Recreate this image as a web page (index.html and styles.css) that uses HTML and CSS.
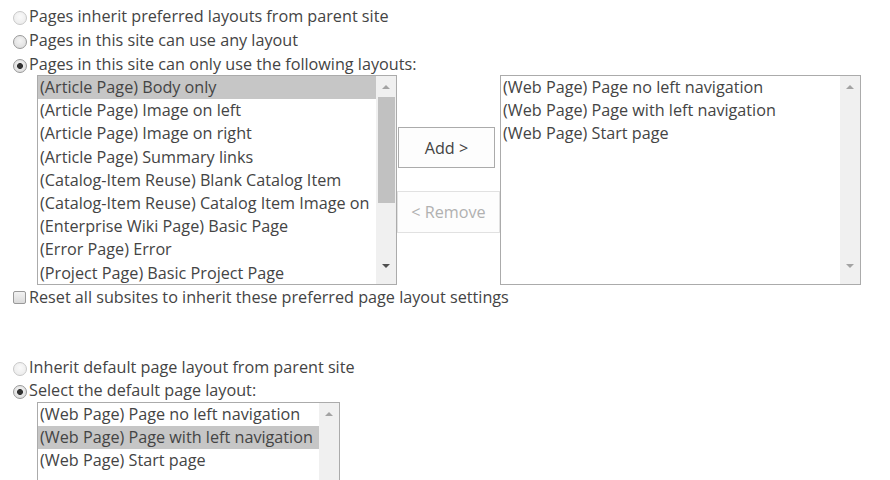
FILE: index.html
```html
<!DOCTYPE html>
<html lang="en">
<head>
<meta charset="utf-8">
<title>Page layouts and site templates</title>
<link rel="stylesheet" href="styles.css">
</head>
<body>
<div class="page">
  <section class="layouts">
    <div class="opt opt-top"><span class="radio is-disabled"></span><span class="lbl">Pages inherit preferred layouts from parent site</span></div>
    <div class="opt opt-top"><span class="radio"></span><span class="lbl">Pages in this site can use any layout</span></div>
    <div class="opt opt-top"><span class="radio is-checked"></span><span class="lbl">Pages in this site can only use the following layouts:</span></div>
    <div class="picker">
      <div class="listbox lb-source">
        <ul class="items">
          <li class="sel">(Article Page) Body only</li>
          <li>(Article Page) Image on left</li>
          <li>(Article Page) Image on right</li>
          <li>(Article Page) Summary links</li>
          <li>(Catalog-Item Reuse) Blank Catalog Item</li>
          <li>(Catalog-Item Reuse) Catalog Item Image on</li>
          <li>(Enterprise Wiki Page) Basic Page</li>
          <li>(Error Page) Error</li>
          <li>(Project Page) Basic Project Page</li>
        </ul>
        <div class="sbar">
          <div class="sb-btn"><span class="arr up"></span></div>
          <div class="sb-track"><div class="sb-thumb"></div></div>
          <div class="sb-btn sb-btn-down"><span class="arr down on"></span></div>
        </div>
      </div>
      <div class="mid">
        <button class="btn btn-add" type="button">Add &gt;</button>
        <button class="btn btn-remove" type="button" disabled>&lt; Remove</button>
      </div>
      <div class="listbox lb-target">
        <ul class="items">
          <li>(Web Page) Page no left navigation</li>
          <li>(Web Page) Page with left navigation</li>
          <li>(Web Page) Start page</li>
        </ul>
        <div class="sbar">
          <div class="sb-btn"><span class="arr up"></span></div>
          <div class="sb-track"></div>
          <div class="sb-btn sb-btn-down"><span class="arr down"></span></div>
        </div>
      </div>
    </div>
    <div class="opt"><span class="check"></span><span class="lbl">Reset all subsites to inherit these preferred page layout settings</span></div>
  </section>
  <section class="default">
    <div class="opt"><span class="radio is-disabled"></span><span class="lbl">Inherit default page layout from parent site</span></div>
    <div class="opt opt-select"><span class="radio is-checked"></span><span class="lbl">Select the default page layout:</span></div>
    <div class="listbox lb-default">
      <ul class="items">
        <li>(Web Page) Page no left navigation</li>
        <li class="sel">(Web Page) Page with left navigation</li>
        <li>(Web Page) Start page</li>
      </ul>
      <div class="sbar">
        <div class="sb-btn"><span class="arr up"></span></div>
        <div class="sb-track"></div>
      </div>
    </div>
  </section>
</div>
</body>
</html>
```
FILE: styles.css
```css
html, body {
  margin: 0;
  overflow: hidden;
  background: #fff;
}

body {
  font-family: "Open Sans", "Noto Sans", sans-serif;
  font-size: 16.2px;
  color: #444;
}

.page {
  padding: 2px 8px 0;
}

.opt {
  display: flex;
  align-items: flex-start;
  height: 24px;
  line-height: 24px;
  white-space: nowrap;
}

.opt-top {
  line-height: 28px;
}

.radio {
  flex: none;
  box-sizing: border-box;
  width: 14px;
  height: 14px;
  margin: 9px 2px 0 5px;
  border-radius: 50%;
  border: 1px solid #999;
  background: radial-gradient(circle at 50% 40%, #f4f4f4 0, #d9d9d9 100%);
}

.radio.is-disabled {
  border-color: #c8c8c8;
  background: radial-gradient(circle at 50% 40%, #fafafa 0, #e8e8e8 100%);
}

.radio.is-checked {
  background:
    radial-gradient(circle, #333 0, #333 2.6px, transparent 3.3px),
    radial-gradient(circle at 50% 40%, #f4f4f4 0, #d9d9d9 100%);
}

.check {
  flex: none;
  box-sizing: border-box;
  width: 13px;
  height: 13px;
  margin: 6px 3px 0 5px;
  border: 1px solid #999;
  border-radius: 2px;
  background: linear-gradient(#f2f2f2, #dadada);
}

.picker {
  display: flex;
  align-items: flex-start;
  margin: 1px 0 0 29px;
}

.listbox {
  display: flex;
  box-sizing: border-box;
  border: 1px solid #ababab;
  background: #fff;
  overflow: hidden;
}

.lb-source {
  width: 360px;
  height: 210px;
}

.lb-target {
  width: 361px;
  height: 210px;
}

.items {
  list-style: none;
  margin: 0;
  padding: 0;
  flex: 1;
  min-width: 0;
  overflow: hidden;
}

.items li {
  height: 23.2px;
  line-height: 23.2px;
  padding-left: 2px;
  white-space: nowrap;
  overflow: hidden;
}

.items li.sel {
  background: #c6c6c6;
}

.sbar {
  flex: none;
  width: 20px;
  display: flex;
  flex-direction: column;
  background: #f0f0f0;
}

.sb-btn {
  flex: none;
  height: 21px;
  display: flex;
  align-items: center;
  justify-content: center;
}

.sb-btn-down {
  height: 25px;
  align-items: flex-start;
  padding-top: 5px;
  box-sizing: border-box;
}

.sb-track {
  flex: 1;
}

.sb-thumb {
  width: 17px;
  height: 106px;
  margin-left: 2px;
  background: #c1c1c1;
}

.arr {
  width: 0;
  height: 0;
  border-left: 4px solid transparent;
  border-right: 4px solid transparent;
}

.arr.up {
  border-bottom: 4px solid #a3a3a3;
}

.arr.down {
  border-top: 4px solid #a3a3a3;
}

.arr.down.on {
  border-top-color: #505050;
}

.mid {
  flex: none;
  width: 103px;
  display: flex;
  flex-direction: column;
  align-items: flex-start;
  gap: 23px;
  padding-top: 52px;
}

.btn {
  font: inherit;
  color: #444;
  background: #fdfdfd;
  border: 1px solid #ababab;
  box-sizing: border-box;
  padding: 0;
  margin: 0;
  border-radius: 0;
}

.btn-add {
  width: 97px;
  height: 41px;
  margin-left: 1px;
}

.btn-remove {
  width: 103px;
  height: 42px;
  border-color: #e1e1e1;
  color: #b1b1b1;
}

.default {
  margin-top: 47px;
}

.default .opt {
  line-height: 22px;
}

.default .radio {
  margin-top: 6px;
}

.default .opt-select {
  height: 22px;
  line-height: 20px;
}

.default .opt-select .radio {
  margin-top: 5px;
}

.lb-default {
  width: 303px;
  height: 120px;
  margin-left: 29px;
}
```
